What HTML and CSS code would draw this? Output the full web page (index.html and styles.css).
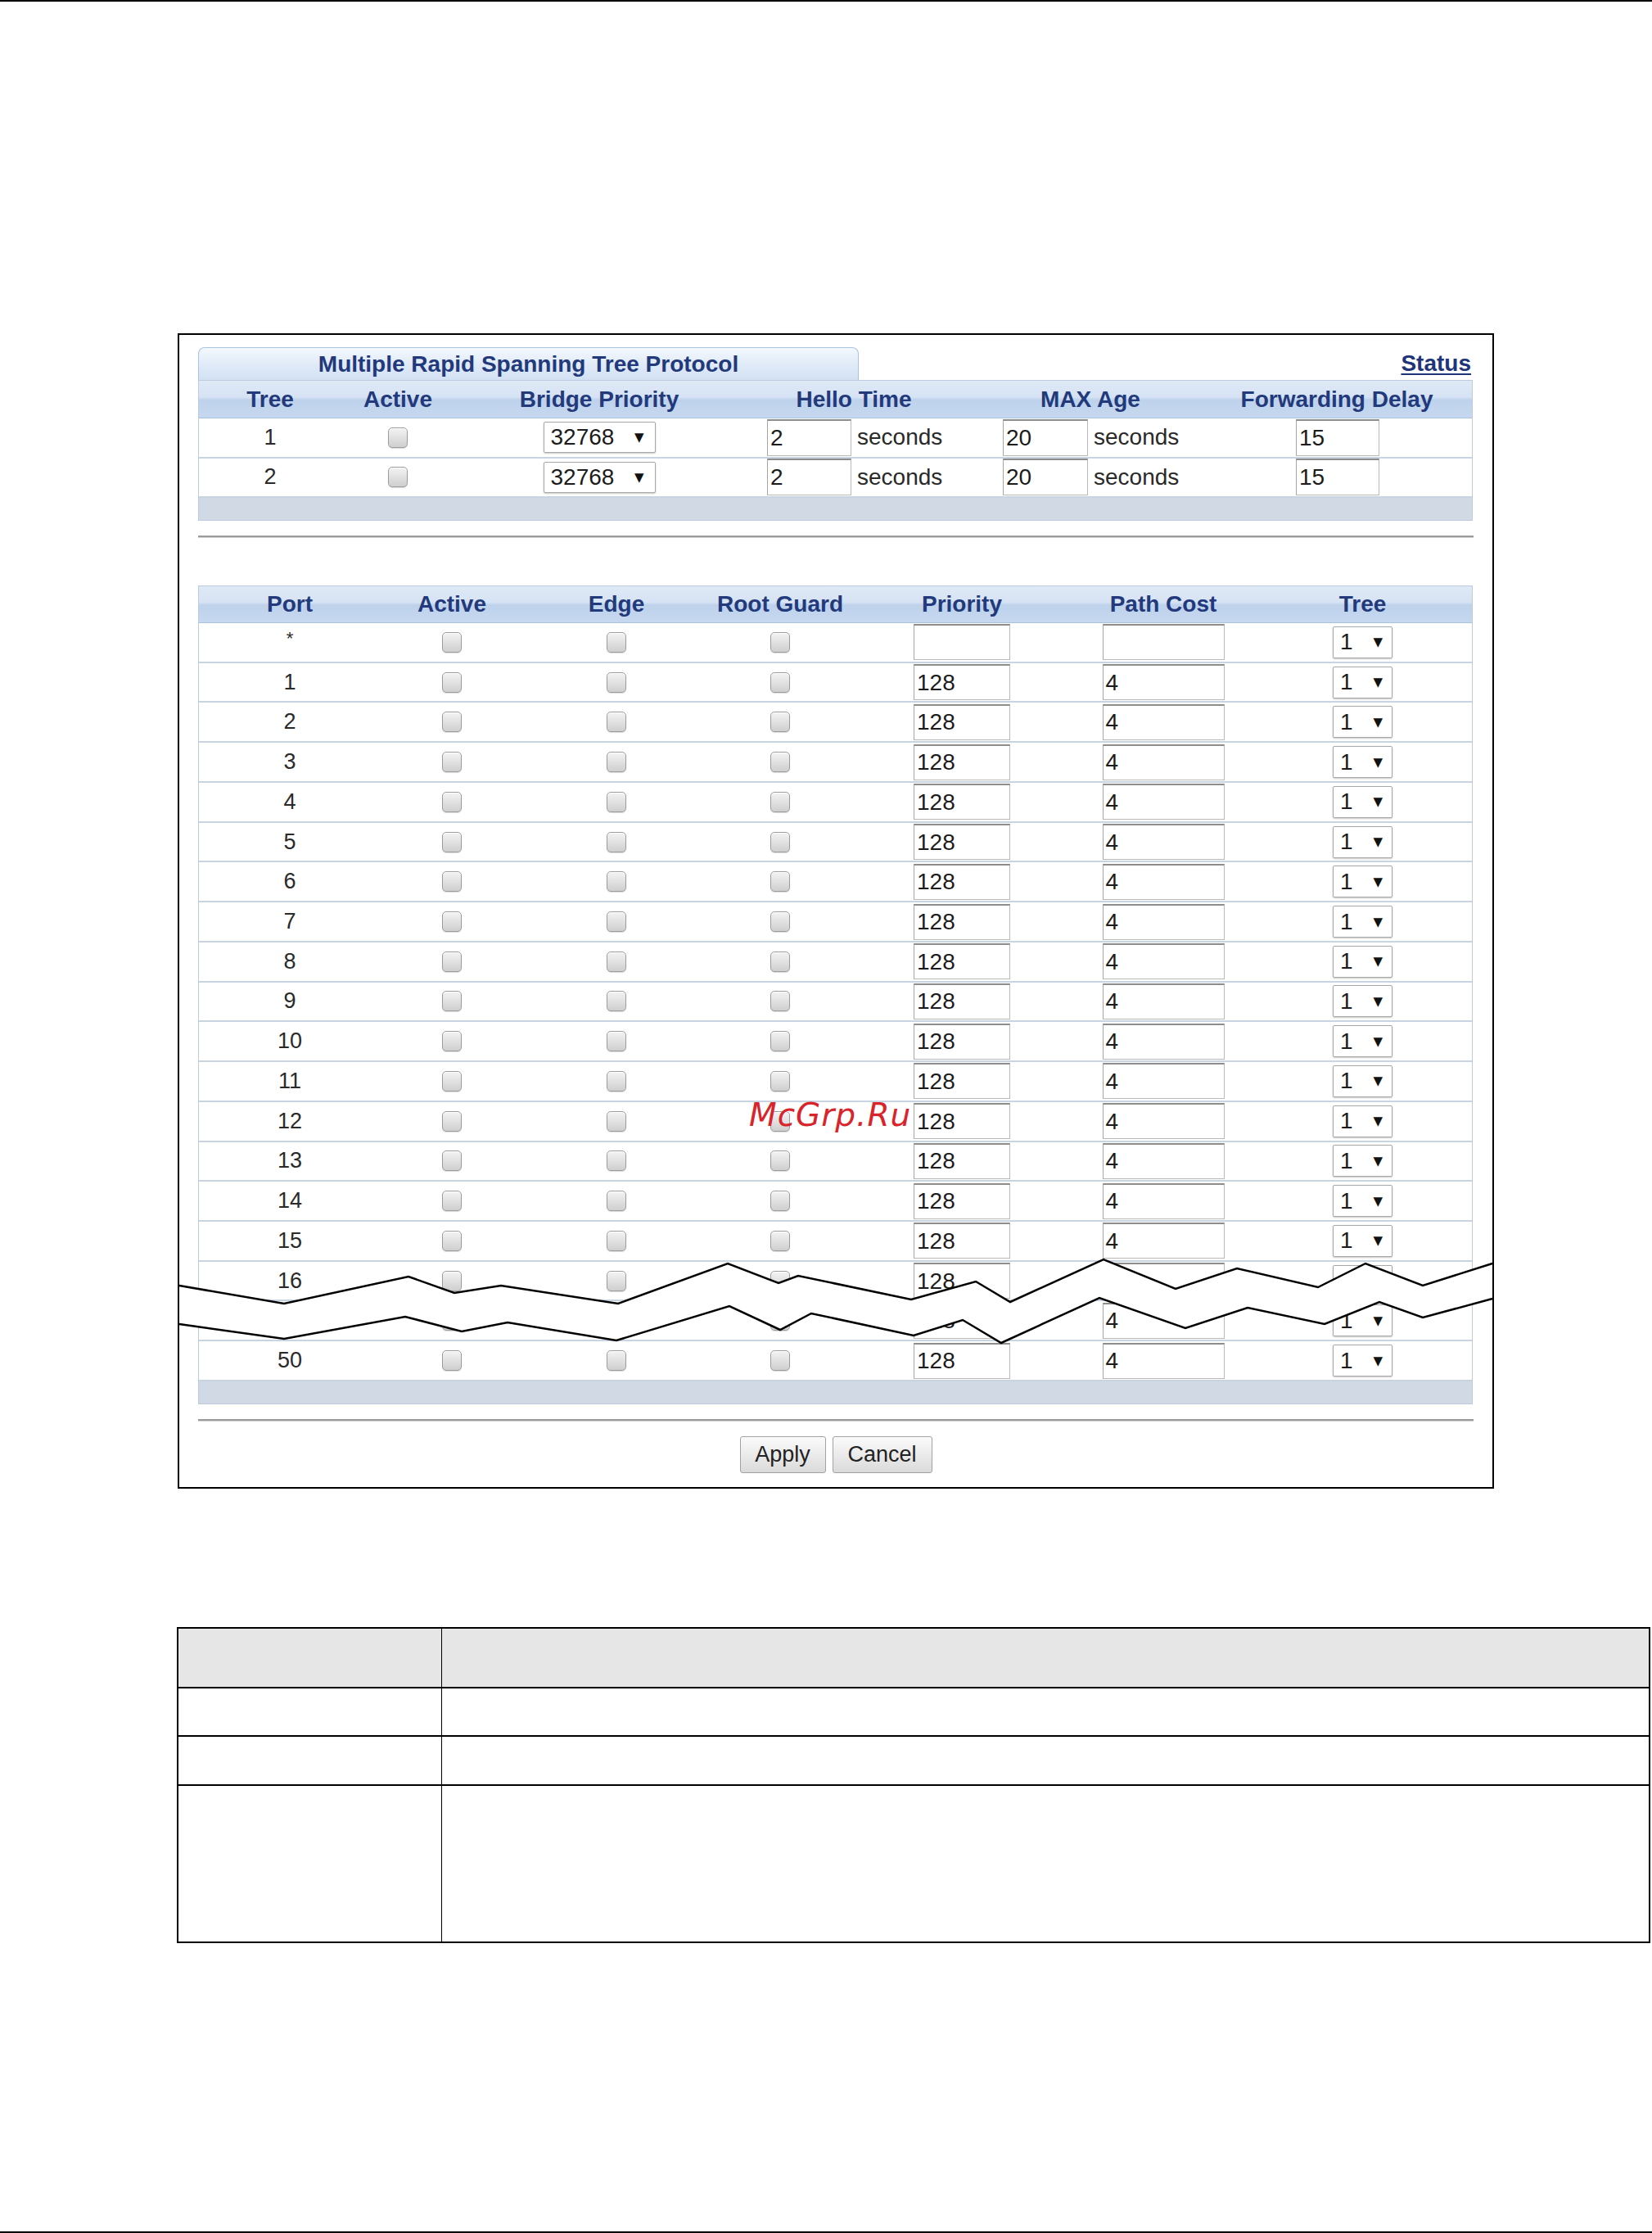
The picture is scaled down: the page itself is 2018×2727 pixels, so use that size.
FILE: index.html
```html
<!DOCTYPE html>
<html>
<head>
<meta charset="utf-8">
<title>Multiple Rapid Spanning Tree Protocol</title>
<link rel="stylesheet" href="styles.css">
</head>
<body>
<div class="page">
  <div class="frame">
    <div class="tabbar">
      <div class="tab">Multiple Rapid Spanning Tree Protocol</div>
      <a class="status">Status</a>
    </div>

    <div class="tbl">
      <div class="hdr g1">
        <span class="h c1">Tree</span>
        <span class="h c2">Active</span>
        <span class="h c3">Bridge Priority</span>
        <span class="h c5">Hello Time</span>
        <span class="h c7">MAX Age</span>
        <span class="h c9">Forwarding Delay</span>
      </div>
      <div class="trow g1">
        <span class="num c1">1</span>
        <span class="cb c2"></span>
        <span class="sel bsel c3"><span>32768</span><span class="arr">▼</span></span>
        <span class="pair c5"><span class="inp hel">2</span><span class="unit">seconds</span></span>
        <span class="pair c7"><span class="inp age">20</span><span class="unit">seconds</span></span>
        <span class="inp fwd c9">15</span>
      </div>
      <div class="trow g1">
        <span class="num c1">2</span>
        <span class="cb c2"></span>
        <span class="sel bsel c3"><span>32768</span><span class="arr">▼</span></span>
        <span class="pair c5"><span class="inp hel">2</span><span class="unit">seconds</span></span>
        <span class="pair c7"><span class="inp age">20</span><span class="unit">seconds</span></span>
        <span class="inp fwd c9">15</span>
      </div>
      <div class="foot"></div>
    </div>

    <div class="rule first"></div>

    <div class="tbl t2">
      <div class="hdr g2">
        <span class="h">Port</span>
        <span class="h">Active</span>
        <span class="h">Edge</span>
        <span class="h">Root Guard</span>
        <span class="h">Priority</span>
        <span class="h">Path Cost</span>
        <span class="h">Tree</span>
      </div>
      <div class="prow g2"><span class="num star">*</span><span class="cb"></span><span class="cb"></span><span class="cb"></span><span class="inp pri"></span><span class="inp pc"></span><span class="sel tsel"><span>1</span><span class="arr">▼</span></span></div>
      <div class="prow g2"><span class="num">1</span><span class="cb"></span><span class="cb"></span><span class="cb"></span><span class="inp pri">128</span><span class="inp pc">4</span><span class="sel tsel"><span>1</span><span class="arr">▼</span></span></div>
      <div class="prow g2"><span class="num">2</span><span class="cb"></span><span class="cb"></span><span class="cb"></span><span class="inp pri">128</span><span class="inp pc">4</span><span class="sel tsel"><span>1</span><span class="arr">▼</span></span></div>
      <div class="prow g2"><span class="num">3</span><span class="cb"></span><span class="cb"></span><span class="cb"></span><span class="inp pri">128</span><span class="inp pc">4</span><span class="sel tsel"><span>1</span><span class="arr">▼</span></span></div>
      <div class="prow g2"><span class="num">4</span><span class="cb"></span><span class="cb"></span><span class="cb"></span><span class="inp pri">128</span><span class="inp pc">4</span><span class="sel tsel"><span>1</span><span class="arr">▼</span></span></div>
      <div class="prow g2"><span class="num">5</span><span class="cb"></span><span class="cb"></span><span class="cb"></span><span class="inp pri">128</span><span class="inp pc">4</span><span class="sel tsel"><span>1</span><span class="arr">▼</span></span></div>
      <div class="prow g2"><span class="num">6</span><span class="cb"></span><span class="cb"></span><span class="cb"></span><span class="inp pri">128</span><span class="inp pc">4</span><span class="sel tsel"><span>1</span><span class="arr">▼</span></span></div>
      <div class="prow g2"><span class="num">7</span><span class="cb"></span><span class="cb"></span><span class="cb"></span><span class="inp pri">128</span><span class="inp pc">4</span><span class="sel tsel"><span>1</span><span class="arr">▼</span></span></div>
      <div class="prow g2"><span class="num">8</span><span class="cb"></span><span class="cb"></span><span class="cb"></span><span class="inp pri">128</span><span class="inp pc">4</span><span class="sel tsel"><span>1</span><span class="arr">▼</span></span></div>
      <div class="prow g2"><span class="num">9</span><span class="cb"></span><span class="cb"></span><span class="cb"></span><span class="inp pri">128</span><span class="inp pc">4</span><span class="sel tsel"><span>1</span><span class="arr">▼</span></span></div>
      <div class="prow g2"><span class="num">10</span><span class="cb"></span><span class="cb"></span><span class="cb"></span><span class="inp pri">128</span><span class="inp pc">4</span><span class="sel tsel"><span>1</span><span class="arr">▼</span></span></div>
      <div class="prow g2"><span class="num">11</span><span class="cb"></span><span class="cb"></span><span class="cb"></span><span class="inp pri">128</span><span class="inp pc">4</span><span class="sel tsel"><span>1</span><span class="arr">▼</span></span></div>
      <div class="prow g2"><span class="num">12</span><span class="cb"></span><span class="cb"></span><span class="cb"></span><span class="inp pri">128</span><span class="inp pc">4</span><span class="sel tsel"><span>1</span><span class="arr">▼</span></span></div>
      <div class="prow g2"><span class="num">13</span><span class="cb"></span><span class="cb"></span><span class="cb"></span><span class="inp pri">128</span><span class="inp pc">4</span><span class="sel tsel"><span>1</span><span class="arr">▼</span></span></div>
      <div class="prow g2"><span class="num">14</span><span class="cb"></span><span class="cb"></span><span class="cb"></span><span class="inp pri">128</span><span class="inp pc">4</span><span class="sel tsel"><span>1</span><span class="arr">▼</span></span></div>
      <div class="prow g2"><span class="num">15</span><span class="cb"></span><span class="cb"></span><span class="cb"></span><span class="inp pri">128</span><span class="inp pc">4</span><span class="sel tsel"><span>1</span><span class="arr">▼</span></span></div>
      <div class="prow g2"><span class="num">16</span><span class="cb"></span><span class="cb"></span><span class="cb"></span><span class="inp pri">128</span><span class="inp pc">4</span><span class="sel tsel"><span>1</span><span class="arr">▼</span></span></div>
      <div class="prow g2"><span class="num">49</span><span class="cb"></span><span class="cb"></span><span class="cb"></span><span class="inp pri">128</span><span class="inp pc">4</span><span class="sel tsel"><span>1</span><span class="arr">▼</span></span></div>
      <div class="prow g2"><span class="num">50</span><span class="cb"></span><span class="cb"></span><span class="cb"></span><span class="inp pri">128</span><span class="inp pc">4</span><span class="sel tsel"><span>1</span><span class="arr">▼</span></span></div>
      <div class="foot"></div>
    </div>

    <div class="rule second"></div>

    <div class="btns">
      <span class="btn apply">Apply</span>
      <span class="btn cancel">Cancel</span>
    </div>
  </div>

  <table class="desc">
    <tr class="d-head"><td class="dl"></td><td class="dr"></td></tr>
    <tr class="d-r1"><td class="dl"></td><td class="dr"></td></tr>
    <tr class="d-r2"><td class="dl"></td><td class="dr"></td></tr>
    <tr class="d-r3"><td class="dl"></td><td class="dr"></td></tr>
  </table>

  <svg class="breakline" viewBox="217 1530 1609 120" width="1609" height="120" xmlns="http://www.w3.org/2000/svg">
    <polygon fill="#fff" points="219,1570 347,1592 499,1559 555,1579 612,1570 755,1592 889,1543 951,1567 975,1558 1113,1587 1192,1565 1234,1590 1348,1538 1436,1574 1511,1549 1610,1572 1668,1543 1738,1570 1823,1543 1823,1586 1738,1609 1685,1590 1618,1617 1524,1597 1448,1622 1343,1585 1223,1640 1176,1612 1116,1631 991,1604 953,1624 891,1595 753,1637 620,1615 564,1626 495,1608 347,1635 219,1617"/>
    <polyline fill="none" stroke="#000" stroke-width="2.5" stroke-linejoin="miter" points="219,1570 347,1592 499,1559 555,1579 612,1570 755,1592 889,1543 951,1567 975,1558 1113,1587 1192,1565 1234,1590 1348,1538 1436,1574 1511,1549 1610,1572 1668,1543 1738,1570 1823,1543"/>
    <polyline fill="none" stroke="#000" stroke-width="2.5" stroke-linejoin="miter" points="219,1617 347,1635 495,1608 564,1626 620,1615 753,1637 891,1595 953,1624 991,1604 1116,1631 1176,1612 1223,1640 1343,1585 1448,1622 1524,1597 1618,1617 1685,1590 1738,1609 1823,1586"/>
  </svg>

  <div class="watermark">McGrp.Ru</div>
</div>
</body>
</html>
```

FILE: styles.css
```css
body {
  margin: 0;
  background: #fff;
  font-family: "Liberation Sans", Arial, sans-serif;
  color: #1c1c1c;
}

.page {
  position: relative;
  width: 2018px;
  height: 2727px;
  box-sizing: border-box;
  border-top: 2px solid #000;
  border-bottom: 2px solid #000;
  padding-top: 405px;
  overflow: hidden;
}

/* ---------- UI frame ---------- */
.frame {
  margin-left: 217px;
  width: 1608px;
  height: 1411px;
  box-sizing: border-box;
  border: 2px solid #000;
  padding: 15px 0 0 23px;
}

.tabbar {
  width: 1557px;
  height: 40px;
  display: flex;
  justify-content: space-between;
  align-items: flex-end;
}

.tab {
  width: 807px;
  height: 40px;
  box-sizing: border-box;
  border: 1px solid #a9c3e3;
  border-bottom: none;
  border-radius: 8px 8px 0 0;
  background: linear-gradient(#f4f8fd 0%, #e2ecf8 45%, #d2e1f4 100%);
  color: #22397b;
  font-weight: bold;
  font-size: 28px;
  line-height: 39px;
  text-align: center;
  white-space: nowrap;
}

.status {
  align-self: center;
  margin-right: 2px;
  color: #1f3479;
  font-weight: bold;
  font-size: 28px;
  text-decoration: underline;
  text-decoration-thickness: 2px;
  text-underline-offset: 3px;
}

.tbl {
  width: 1557px;
  box-sizing: border-box;
  border: 1px solid #bccbdf;
}

.hdr {
  height: 45px;
  border-bottom: 1px solid #a9c0de;
  background: linear-gradient(#dfe9f6 0%, #d6e3f4 44%, #bed2ec 52%, #c6d8ef 100%);
  color: #22397b;
  font-weight: bold;
  font-size: 28px;
  align-items: center;
}

.h {
  white-space: nowrap;
  justify-self: center;
}

.g1 {
  display: grid;
  grid-template-columns: 174px 138px 354px 28px 212px 76px 214px 144px 100px 1fr;
  align-items: center;
}

.c1 { grid-column: 1; justify-self: center; }
.c2 { grid-column: 2; justify-self: center; }
.c3 { grid-column: 3; justify-self: center; }
.c5 { grid-column: 5; justify-self: start; }
.c7 { grid-column: 7; justify-self: start; }
.c9 { grid-column: 9; justify-self: start; }
.hdr .c5, .hdr .c7, .hdr .c9 { justify-self: center; }

.trow {
  height: 48.5px;
  box-sizing: border-box;
  border-bottom: 2px solid #c9d4e3;
  background: #fff;
}

.foot {
  height: 27px;
  background: #d1d9e4;
}

.num {
  font-size: 27px;
  color: #2a2a2a;
}

.num.star {
  font-size: 22px;
  align-self: start;
  padding-top: 6px;
}

.cb {
  display: block;
  width: 24px;
  height: 25px;
  box-sizing: border-box;
  border: 1px solid #9c9c9c;
  border-radius: 5px;
  background: linear-gradient(#f3f3f3, #cfcfcf);
  box-shadow: inset 0 1px 0 #fff, 0 1px 1px rgba(0, 0, 0, 0.14);
}

.inp {
  display: flex;
  align-items: center;
  height: 45px;
  box-sizing: border-box;
  padding-left: 3px;
  border: 1px solid #b9b9b9;
  border-top: 2px solid #8d8d8d;
  border-left-color: #a5a5a5;
  background: #fff;
  font-size: 28px;
  color: #1c1c1c;
}

.pair {
  display: flex;
  align-items: center;
  white-space: nowrap;
}

.unit {
  margin-left: 7px;
  font-size: 28px;
  color: #2a2a2a;
}

.hel { width: 103px; }
.age { width: 104px; }
.fwd { width: 102px; }

.sel {
  display: flex;
  align-items: center;
  justify-content: space-between;
  box-sizing: border-box;
  border: 1px solid #a8a8a8;
  border-radius: 2px;
  background: #fff;
  box-shadow: 0 1px 2px rgba(0, 0, 0, 0.22);
  font-size: 28px;
  color: #1c1c1c;
}

.arr {
  font-family: "DejaVu Sans", sans-serif;
  font-size: 15px;
  color: #111;
}

.bsel {
  width: 137px;
  height: 38px;
  padding: 0 13px 0 8px;
}

/* ---------- Port table ---------- */
.rule {
  width: 1558px;
  height: 0;
  border-top: 2px solid #9b9b9b;
  border-bottom: 1px solid #d2d2d2;
}

.rule.first { margin-top: 18px; }
.rule.second { margin-top: 18px; }

.t2 { margin-top: 58px; }

.g2 {
  display: grid;
  grid-template-columns: 222px 174px 228px 172px 272px 220px 1fr;
  align-items: center;
  justify-items: center;
}

.hdr.g2 { height: 44px; }

.prow {
  height: 48.74px;
  box-sizing: border-box;
  border-bottom: 2px solid #c9d4e3;
  background: #fff;
}

.pri { width: 118px; height: 44px; }
.pc { width: 149px; height: 44px; }

.tsel {
  width: 73px;
  height: 39px;
  padding: 0 11px 0 8px;
}

.btns {
  width: 1558px;
  margin-top: 18px;
  display: flex;
  justify-content: center;
  gap: 8px;
}

.btn {
  display: flex;
  align-items: center;
  justify-content: center;
  height: 45px;
  box-sizing: border-box;
  border: 1px solid #a2a2a2;
  border-radius: 3px;
  background: linear-gradient(#fbfbfb, #dadada);
  font-size: 27px;
  color: #222;
}

.apply { width: 105px; }
.cancel { width: 122px; }

/* ---------- Description table ---------- */
.desc {
  margin-top: 169px;
  margin-left: 216px;
  width: 1800px;
  border-collapse: collapse;
}

.desc td {
  padding: 0;
  border-top: 2px solid #000;
  border-bottom: 2px solid #000;
}

.desc .dl {
  width: 321px;
  border-left: 2px solid #000;
  border-right: 1px solid #000;
}

.desc .dr {
  border-right: 2px solid #000;
}

.d-head td { height: 71px; background: #e6e6e6; }
.d-r1 td { height: 57px; }
.d-r2 td { height: 58px; }
.d-r3 td { height: 190px; }

/* ---------- overlays ---------- */
.breakline {
  position: absolute;
  left: 217px;
  top: 1528px;
}

.watermark {
  position: absolute;
  left: 915px;
  top: 1340px;
  font-family: "DejaVu Sans", sans-serif;
  font-style: italic;
  font-size: 39px;
  line-height: 39px;
  letter-spacing: 1px;
  color: #d8242a;
}
```
